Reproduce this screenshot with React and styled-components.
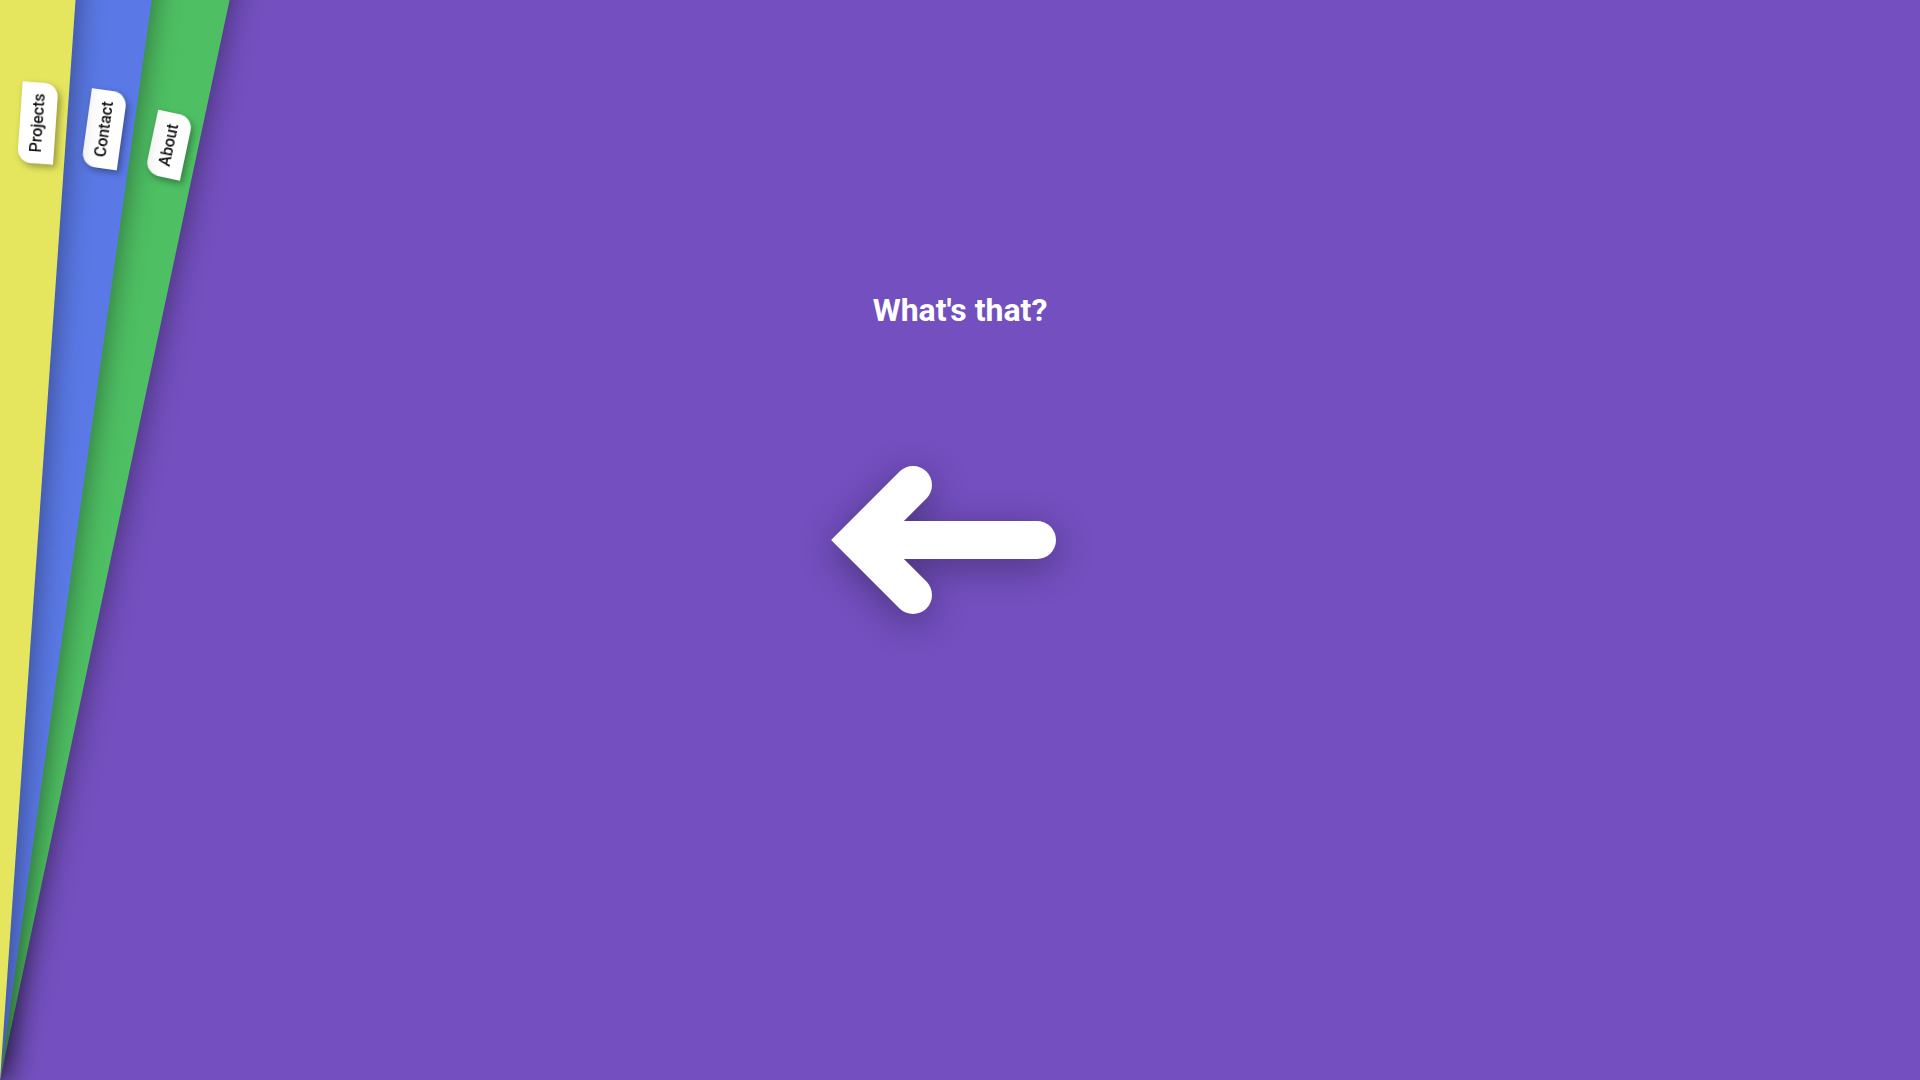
import React from "react";
import styled, { createGlobalStyle } from "styled-components";

const GlobalStyle = createGlobalStyle`
  html, body {
    margin: 0;
    padding: 0;
    overflow: hidden;
    background: #734fbf;
    font-family: Roboto, "Liberation Sans", Arial, sans-serif;
  }
`;

const Main = styled.main`
  width: 100vw;
  height: 100vh;
  background: #734fbf;
  display: flex;
  flex-direction: column;
  align-items: center;
`;

const Heading = styled.h1`
  margin: 294px 0 0;
  font-family: Roboto, "Liberation Sans", Arial, sans-serif;
  font-size: 32px;
  line-height: 1;
  font-weight: 700;
  color: #ffffff;
`;

const ArrowIcon = styled.svg`
  margin-top: 104px;
  width: 300px;
  height: 220px;
  display: block;
  overflow: visible;
  filter: drop-shadow(0 8px 18px rgba(0, 0, 0, 0.32));
`;

const Panel = styled.section`
  position: fixed;
  left: -100vw;
  bottom: 0;
  width: 100vw;
  height: 200vh;
  background: ${(p) => p.$color};
  transform-origin: bottom right;
  transform: rotate(${(p) => p.$angle}deg);
  z-index: ${(p) => p.$layer};
  box-shadow: 0 0 30px rgba(0, 0, 0, 0.45);
`;

const TabSlot = styled.div`
  position: absolute;
  right: 11px;
  bottom: calc(100vh - 163px);
  display: flex;
  align-items: flex-end;
`;

const Tab = styled.a`
  display: block;
  writing-mode: vertical-rl;
  transform: rotate(180deg);
  background: #ffffff;
  color: #111111;
  font-family: Roboto, "Liberation Sans", Arial, sans-serif;
  font-size: 16px;
  font-weight: 500;
  line-height: 18px;
  padding: 11px 9px;
  border-radius: 0 14px 0 14px;
  box-shadow: -3px -3px 7px rgba(0, 0, 0, 0.35);
  text-decoration: none;
  cursor: pointer;
`;

const panels = [
  { label: "Projects", color: "#e5e65e", angle: 4, layer: 30 },
  { label: "Contact", color: "#5a79e6", angle: 8, layer: 20 },
  { label: "About", color: "#4ec063", angle: 12, layer: 10 },
];

export default function App() {
  return (
    <>
      <GlobalStyle />
      <Main>
        <Heading>What's that?</Heading>
        <ArrowIcon viewBox="0 0 300 220" aria-hidden="true">
          <path
            d="M103 55 L48 110 L103 165"
            fill="none"
            stroke="#ffffff"
            strokeWidth="38"
            strokeLinecap="round"
            strokeLinejoin="miter"
            strokeMiterlimit="4"
          />
          <path
            d="M60 110 L227 110"
            fill="none"
            stroke="#ffffff"
            strokeWidth="38"
            strokeLinecap="round"
          />
        </ArrowIcon>
      </Main>
      {panels.map((p) => (
        <Panel key={p.label} $color={p.color} $angle={p.angle} $layer={p.layer}>
          <TabSlot>
            <Tab>{p.label}</Tab>
          </TabSlot>
        </Panel>
      ))}
    </>
  );
}
